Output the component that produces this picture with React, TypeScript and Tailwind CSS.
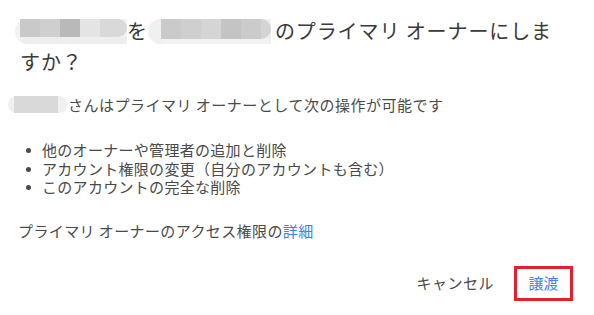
import React from "react";

const font = { fontFamily: '"Noto Sans CJK JP", "Noto Sans", sans-serif' };

function Blur1() {
  return (
    <span className="inline-flex flex-col align-middle rounded-l-full bg-[#f2f2f2] pl-[5px] h-[25px] relative top-[-2px]">
      <span className="flex h-[18px]">
        <span className="w-[20px] bg-[#c9c9c9]" />
        <span className="w-[20px] bg-[#cfcfcf]" />
        <span className="w-[20px] bg-[#b9b9b9]" />
        <span className="w-[20px] bg-[#e4e4e4]" />
        <span className="w-[27px] bg-[#d9d9d9] rounded-r-full" />
      </span>
      <span className="flex h-[7px]">
        <span className="w-[107px] bg-[#eeeeee] rounded-b-md" />
      </span>
    </span>
  );
}

function Blur2() {
  return (
    <span className="inline-flex flex-col align-middle rounded-l-full bg-[#f0f0f0] pl-[13px] h-[25px] relative top-[-2px] mr-[4px]">
      <span className="flex h-[20px]">
        <span className="w-[20px] bg-[#cacaca]" />
        <span className="w-[20px] bg-[#cfcfcf]" />
        <span className="w-[20px] bg-[#d5d5d5]" />
        <span className="w-[20px] bg-[#c4c4c4]" />
        <span className="w-[20px] bg-[#cbcbcb]" />
        <span className="w-[10px] bg-[#d4d4d4] rounded-r-full" />
      </span>
      <span className="flex h-[5px]">
        <span className="w-[108px] bg-[#f2f2f2] rounded-b-md" />
      </span>
    </span>
  );
}

function Blur3() {
  return (
    <span className="inline-flex align-middle items-center h-[17px] rounded-full bg-[#f0f0f0] px-[6px] w-[60px] relative top-[-2px]">
      <span className="h-[17px] w-[44px] bg-[#d9d9d9]" />
    </span>
  );
}

const items = [
  "他のオーナーや管理者の追加と削除",
  "アカウント権限の変更（自分のアカウントも含む）",
  "このアカウントの完全な削除",
];

export default function App() {
  return (
    <div style={font} className="w-[594px] h-[315px] bg-white overflow-hidden flex flex-col">
      <h1 className="pl-[15px] pr-[20px] pt-[15px] text-[20px] leading-[31px] text-[#3a3a3a] tracking-[0.9px] font-normal">
        <Blur1 />を<Blur2 />のプライマリ オーナーにしま
        <br />
        <span className="pl-[5px]">すか？</span>
      </h1>
      <p className="mt-[19px] pl-[8px] text-[15px] leading-[18px] text-[#4a4a4a] tracking-[0.5px]">
        <Blur3 />さんはプライマリ オーナーとして次の操作が可能です
      </p>
      <ul className="mt-[26px] pl-[26px] text-[15px] leading-[18.5px] text-[#4a4a4a] tracking-[0.3px]">
        {items.map((t) => (
          <li key={t} className="flex items-center">
            <span className="w-[5px] h-[5px] rounded-full bg-[#4a4a4a] mr-[11px]" />
            <span>{t}</span>
          </li>
        ))}
      </ul>
      <p className="mt-[25px] pl-[18px] text-[15px] leading-[18px] text-[#4a4a4a] tracking-[0.4px]">
        プライマリ オーナーのアクセス権限の<span className="text-[#3b82e8]">詳細</span>
      </p>
      <div className="mt-auto mb-[14px] flex justify-end items-center pr-[21px] gap-[20px]">
        <button className="text-[15px] text-[#4a4a4a] tracking-[0.5px]">キャンセル</button>
        <button className="w-[59px] h-[35px] border-[3px] border-[#e5202e] text-[15px] text-[#4285f4] flex items-center justify-center">
          譲渡
        </button>
      </div>
    </div>
  );
}
